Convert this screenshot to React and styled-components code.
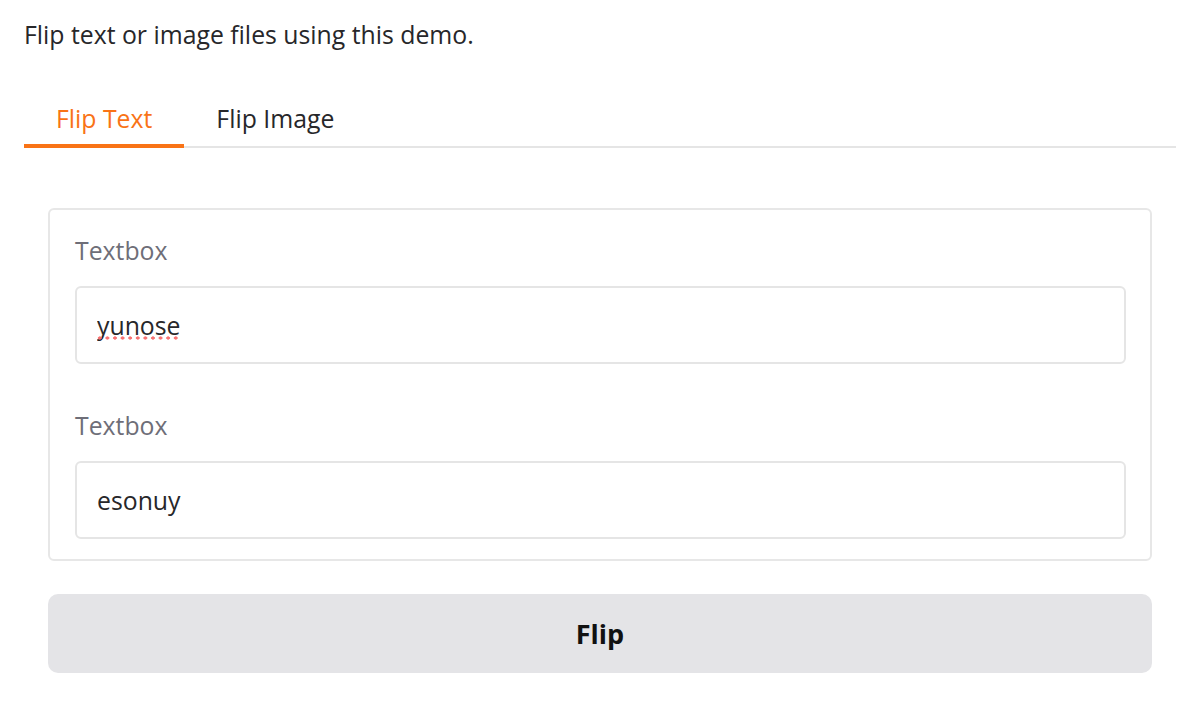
import React, { useState } from 'react';
import styled, { createGlobalStyle } from 'styled-components';

const GlobalStyle = createGlobalStyle`
    body {
        margin: 0;
        background: #fff;
        font-family: "Open Sans", "Noto Sans", sans-serif;
        color: #27272a;
    }
`;

const Page = styled.div`
    padding: 0 26px 0 24px;
`;

const Intro = styled.p`
    margin: 0;
    padding-top: 16px;
    font-size: 24.8px;
    line-height: 36px;
    color: #27272a;
`;

const TabBar = styled.div`
    display: flex;
    margin-top: 48px;
    border-bottom: 2px solid #e5e5e5;
`;

const Tab = styled.button`
    background: none;
    border: none;
    font-family: inherit;
    font-size: 24.8px;
    line-height: 36px;
    padding: 0 32px 8px;
    margin-bottom: -2px;
    color: ${props => (props.$active ? '#f97316' : '#27272a')};
    border-bottom: 4px solid ${props => (props.$active ? '#f97316' : 'transparent')};
    cursor: pointer;
`;

const TabBody = styled.div`
    padding: 60px 24px 0;
    display: flex;
    flex-direction: column;
    gap: 33px;
`;

const Panel = styled.div`
    border: 2px solid #e7e7e7;
    border-radius: 6px;
    padding: 22px 24px 20px 25px;
    display: flex;
    flex-direction: column;
    gap: 43px;
`;

const Field = styled.label`
    display: flex;
    flex-direction: column;
    gap: 18px;
`;

const Label = styled.span`
    font-size: 24.8px;
    line-height: 36px;
    color: #6e6e78;
`;

const InputWrap = styled.div`
    position: relative;
    display: flex;
    flex-direction: column;
`;

const Input = styled.input`
    box-sizing: border-box;
    height: 78px;
    border: 2px solid #e5e5e5;
    border-radius: 6px;
    padding: 0 20px;
    font-family: inherit;
    font-size: 24.8px;
    color: #27272a;
    outline: none;
`;

const Squiggle = styled.span`
    position: absolute;
    left: 21px;
    top: 50px;
    width: 84px;
    height: 4px;
    background-image: radial-gradient(circle, #f87171 1.5px, transparent 1.7px);
    background-size: 7.6px 4px;
    pointer-events: none;
`;

const FlipButton = styled.button`
    height: 79px;
    border: none;
    border-radius: 10px;
    background: #e4e4e7;
    font-family: inherit;
    font-size: 27px;
    font-weight: 700;
    color: #111;
    cursor: pointer;
`;

export default function App() {
    const [tab, setTab] = useState('text');
    const [value, setValue] = useState('yunose');
    const [flipped, setFlipped] = useState('esonuy');

    return (
        <Page>
            <GlobalStyle />
            <Intro>Flip text or image files using this demo.</Intro>
            <TabBar>
                <Tab $active={tab === 'text'} onClick={() => setTab('text')}>Flip Text</Tab>
                <Tab $active={tab === 'image'} onClick={() => setTab('image')}>Flip Image</Tab>
            </TabBar>
            <TabBody>
                <Panel>
                    <Field>
                        <Label>Textbox</Label>
                        <InputWrap>
                            <Input value={value} onChange={e => setValue(e.target.value)} />
                            {value === 'yunose' && <Squiggle />}
                        </InputWrap>
                    </Field>
                    <Field>
                        <Label>Textbox</Label>
                        <Input value={flipped} readOnly />
                    </Field>
                </Panel>
                <FlipButton onClick={() => setFlipped(value.split('').reverse().join(''))}>
                    Flip
                </FlipButton>
            </TabBody>
        </Page>
    );
}
